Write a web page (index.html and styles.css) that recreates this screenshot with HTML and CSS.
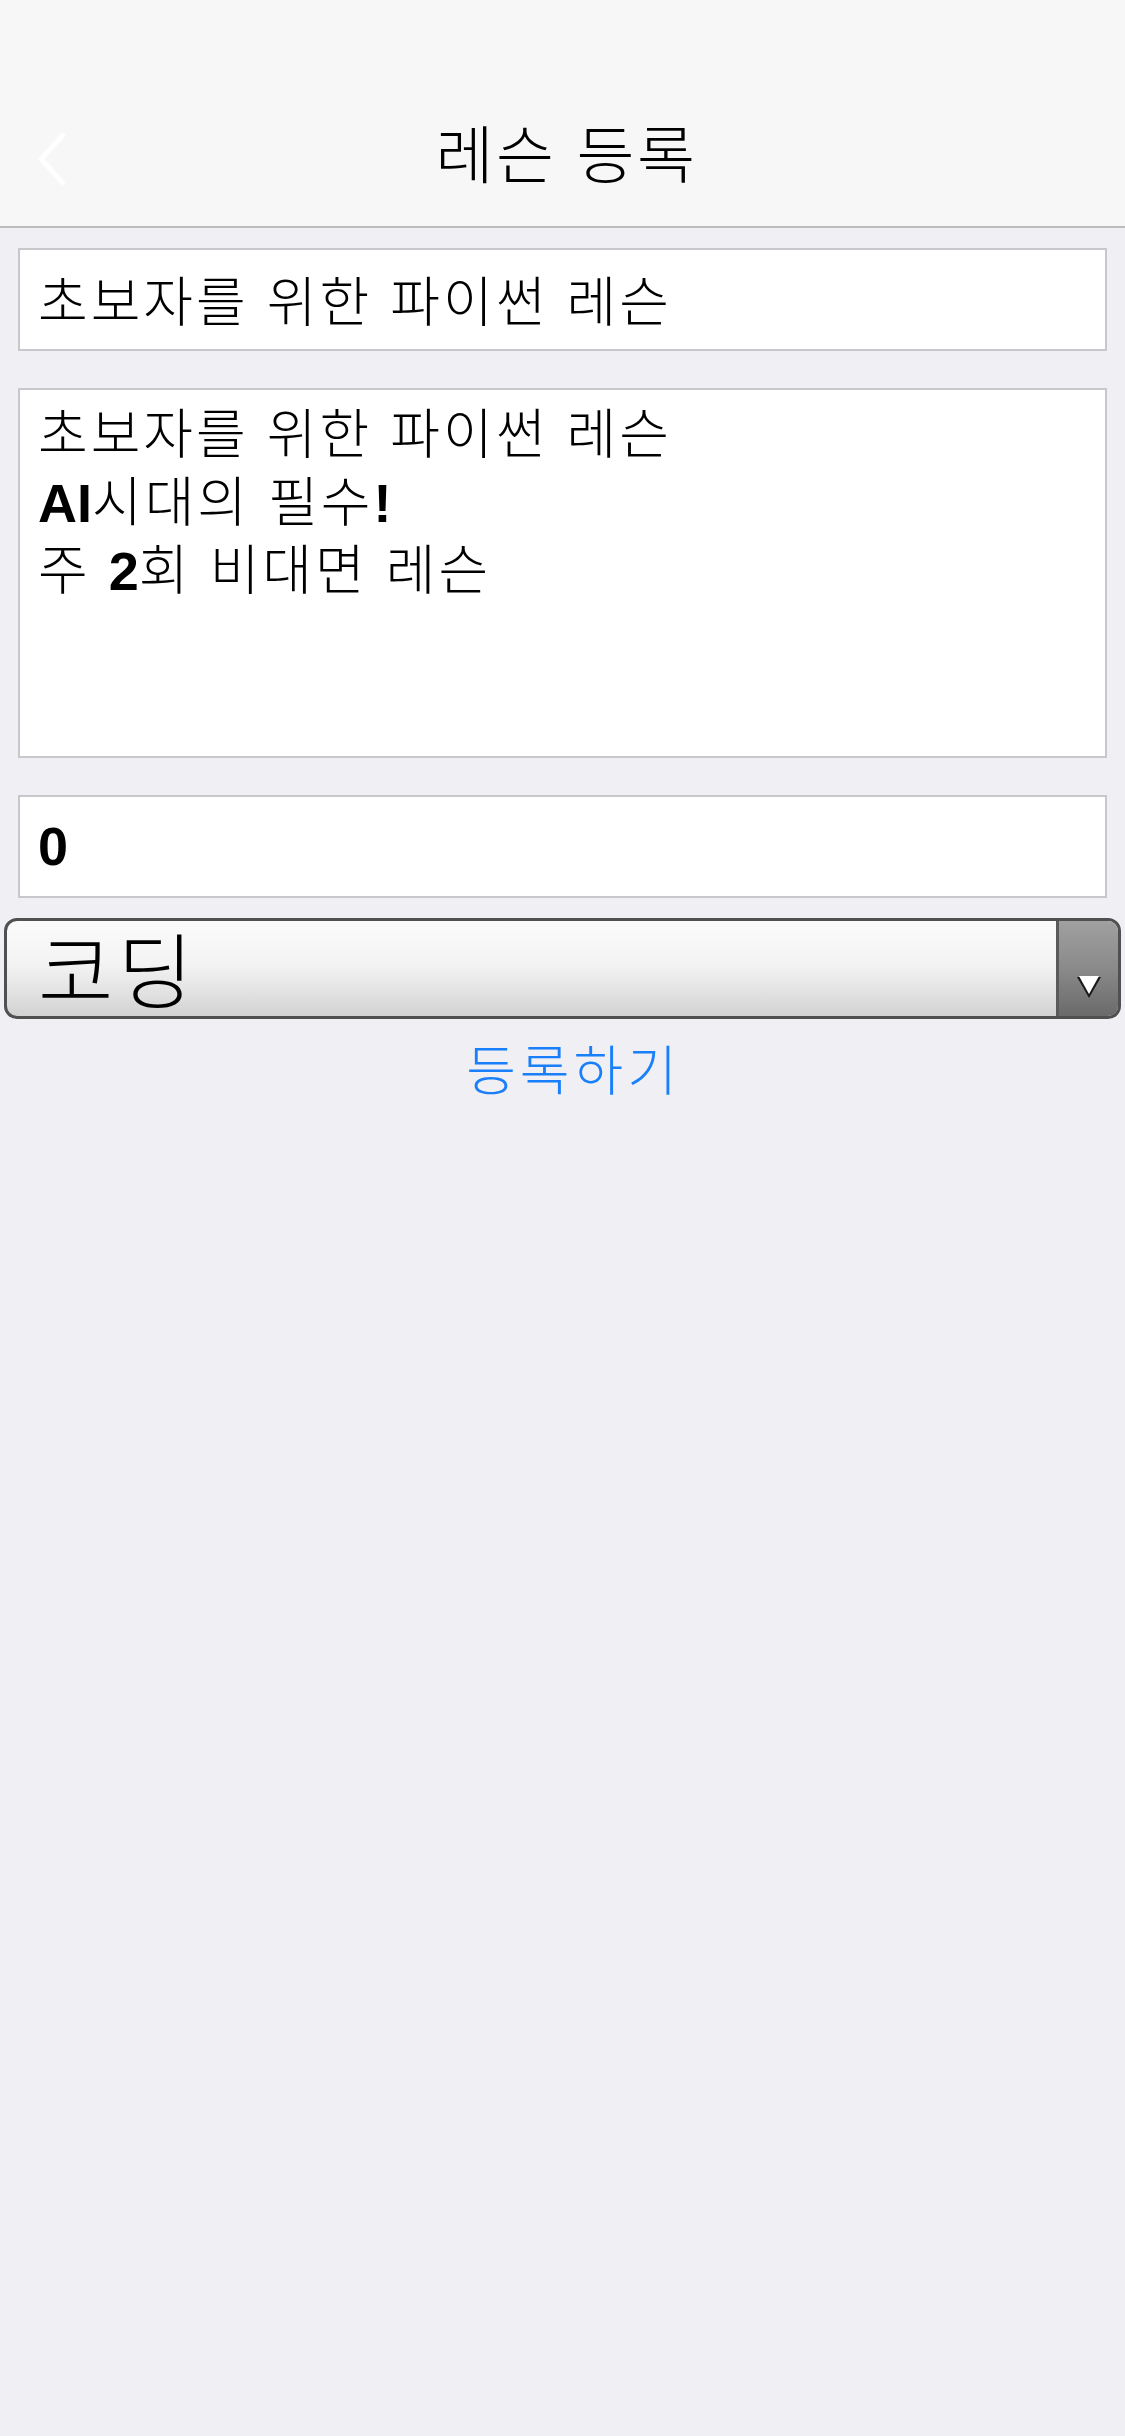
FILE: index.html
```html
<!DOCTYPE html>
<html lang="ko">
<head>
<meta charset="utf-8">
<title>레슨 등록</title>
<link rel="stylesheet" href="styles.css">
</head>
<body>
<header class="topbar">
  <div class="nav">
    <div class="nav-left">
      <svg class="back" width="32" height="56" viewBox="0 0 32 56"><polyline points="28,3 5,28 28,53" fill="none" stroke="#ffffff" stroke-width="5" stroke-linejoin="miter"/></svg>
    </div>
    <div class="nav-title">레슨 등록</div>
    <div class="nav-right"></div>
  </div>
</header>
<main class="form">
  <div class="field single">초보자를 위한 파이썬 레슨</div>
  <div class="field multi">
    <div class="line">초보자를 위한 파이썬 레슨</div>
    <div class="line"><span class="latin">AI</span>시대의 필수<span class="latin">!</span></div>
    <div class="line">주 <span class="latin">2</span>회 비대면 레슨</div>
  </div>
  <div class="field single"><span class="latin">0</span></div>
</main>
<div class="select">
  <div class="select-value">코딩</div>
  <div class="select-arrow">
    <svg width="26" height="24" viewBox="0 0 26 24"><polygon points="1,2 25,2 13,23" fill="#1a1a1a"/><polygon points="3,1 23,1 13,19" fill="#ffffff"/></svg>
  </div>
</div>
<div class="submit-row"><span class="submit">등록하기</span></div>
</body>
</html>
```
FILE: styles.css
```css
html, body {
  margin: 0;
  padding: 0;
}
body {
  background: #efeff4;
  font-family: "Noto Sans CJK KR", "Noto Sans", sans-serif;
  color: #000;
  width: 1125px;
  min-height: 2436px;
}
.topbar {
  background: #f7f7f7;
  height: 228px;
  box-sizing: border-box;
  border-bottom: 2px solid #bdbdbd;
  padding-top: 86px;
}
.nav {
  height: 140px;
  display: grid;
  grid-template-columns: 1fr auto 1fr;
  align-items: center;
}
.nav-left {
  padding-left: 36px;
  display: flex;
  align-items: center;
  padding-top: 6px;
}
.back { display: block; }
.nav-title {
  font-size: 63px;
  font-weight: 300;
  line-height: 1;
  letter-spacing: 2.5px;
  padding-left: 8px;
  padding-bottom: 12px;
}
.form {
  padding: 20px 18px 0 18px;
  display: flex;
  flex-direction: column;
  gap: 37px;
}
.field {
  background: #fff;
  border: 2px solid #c8c8cc;
  box-sizing: border-box;
  font-size: 54px;
  font-weight: 300;
  letter-spacing: 3px;
  padding-left: 18px;
}
.single {
  height: 103px;
  display: flex;
  align-items: center;
  padding-bottom: 2px;
}
.multi {
  height: 370px;
  padding-top: 7px;
}
.line {
  line-height: 68px;
  height: 68px;
  white-space: nowrap;
}
.latin {
  font-family: "Liberation Sans", Arial, sans-serif;
  font-weight: bold;
  letter-spacing: 0;
}
.select {
  margin: 20px 4px 0 4px;
  height: 101px;
  box-sizing: border-box;
  border: 3px solid #505050;
  border-radius: 13px;
  display: flex;
  background: linear-gradient(#fbfbfb 0%, #f3f3f3 45%, #e8e8e8 65%, #d2d2d2 100%);
}
.select-value {
  flex: 1;
  font-size: 82px;
  font-weight: 300;
  letter-spacing: 4px;
  line-height: 95px;
  height: 95px;
  padding-left: 31px;
  display: flex;
  align-items: center;
  padding-bottom: 4px;
  box-sizing: border-box;
}
.select-arrow {
  width: 62px;
  border-left: 3px solid #5a5a5a;
  border-radius: 0 10px 10px 0;
  background: linear-gradient(#a0a0a0 0%, #8a8a8a 50%, #6a6a6a 100%);
  display: flex;
  justify-content: center;
  align-items: flex-end;
  padding-bottom: 17px;
  box-sizing: border-box;
}
.submit-row {
  display: flex;
  justify-content: center;
  padding-top: 14px;
}
.submit {
  color: #1a7ffa;
  font-size: 54px;
  font-weight: 300;
  letter-spacing: 4px;
  line-height: 70px;
  padding-left: 22px;
}
```
